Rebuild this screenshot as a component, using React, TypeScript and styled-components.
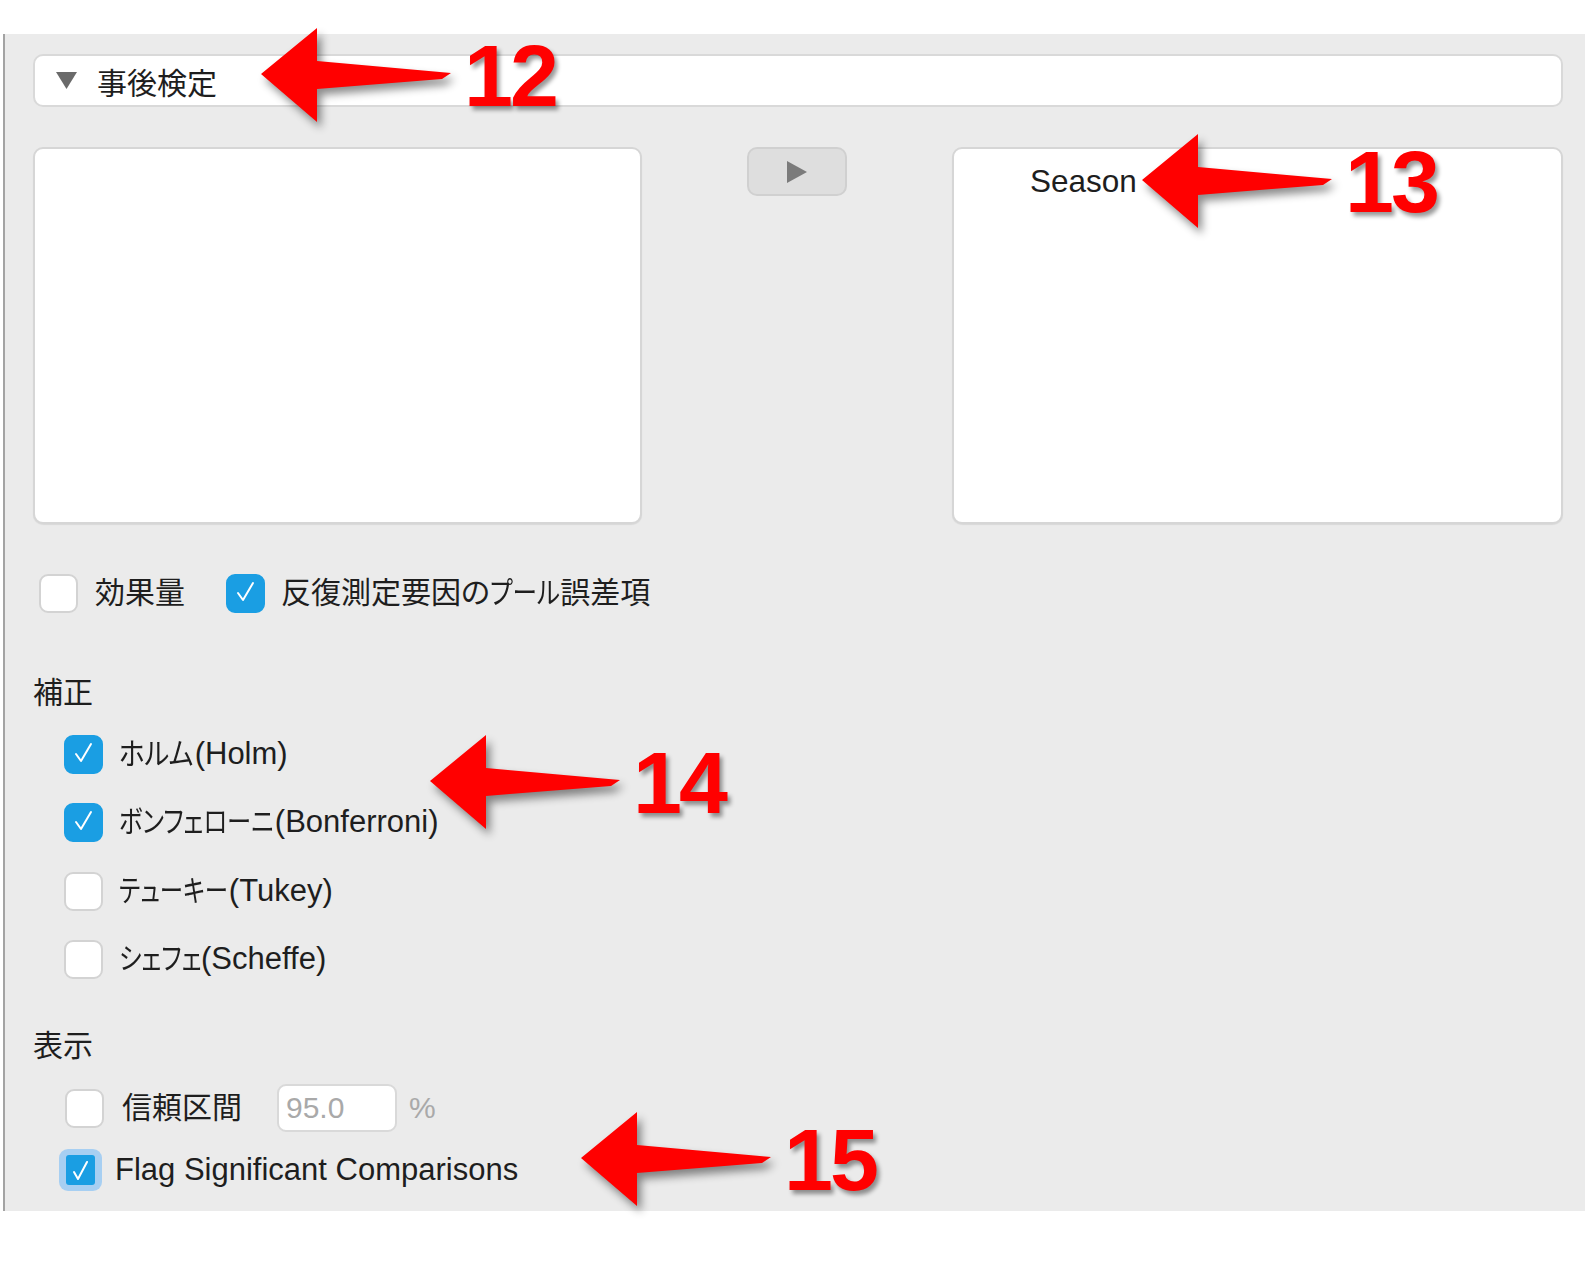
import React from "react";
import styled, { createGlobalStyle } from "styled-components";

const GlobalStyle = createGlobalStyle`
  html, body {
    margin: 0;
    padding: 0;
    background: #ffffff;
  }
  body {
    font-family: "Liberation Sans", "Noto Sans CJK JP", sans-serif;
    color: #1e1e1e;
    font-feature-settings: "palt";
  }
`;

const Page = styled.div`
  position: relative;
  width: 1585px;
  height: 1272px;
  padding-top: 34px;
  box-sizing: border-box;
  overflow: hidden;
`;

const Panel = styled.div`
  margin-left: 3px;
  height: 1177px;
  box-sizing: border-box;
  border-left: 2px solid #a3a3a3;
  background: #ebebeb;
  padding: 20px 22px 0 28px;
  display: flex;
  flex-direction: column;
`;

const SectionHeader = styled.div`
  height: 53px;
  box-sizing: border-box;
  background: #ffffff;
  border: 2px solid #d9d9d9;
  border-radius: 10px;
  display: flex;
  align-items: center;
  padding-left: 21px;
  gap: 20px;
  font-size: 30px;
`;

const ListsRow = styled.div`
  margin-top: 40px;
  height: 377px;
  display: grid;
  grid-template-columns: 609px 1fr 611px;
`;

const ListBox = styled.div`
  background: #ffffff;
  border: 2px solid #d6d6d6;
  border-radius: 10px;
  box-shadow: 0 1px 1px rgba(0, 0, 0, 0.08);
  padding: 14px 0 0 76px;
  font-size: 31.5px;
  line-height: 36px;
`;

const Middle = styled.div`
  display: flex;
  justify-content: center;
  align-items: flex-start;
`;

const MoveButton = styled.div`
  width: 100px;
  height: 49px;
  box-sizing: border-box;
  background: #dedede;
  border: 2px solid #d0d0d0;
  border-radius: 10px;
  display: flex;
  align-items: center;
  justify-content: center;
`;

const Row = styled.div<{ $indent?: number; $top: number; $h?: number }>`
  display: flex;
  align-items: center;
  height: ${(p) => p.$h ?? 40}px;
  margin-top: ${(p) => p.$top}px;
  padding-left: ${(p) => p.$indent ?? 6}px;
  font-size: 30px;
`;

const Label = styled.span<{ $gap?: number }>`
  margin-left: ${(p) => p.$gap ?? 17}px;
  white-space: nowrap;
  line-height: 36px;
`;

const Latin = styled.span`
  font-size: 31px;
`;

/* narrow (condensed) katakana as rendered in the original UI */
const Kana = styled.span<{ $scale: number; $cut: number }>`
  display: inline-block;
  transform: scaleX(${(p) => p.$scale});
  transform-origin: left center;
  margin-right: ${(p) => -p.$cut}px;
`;

const GroupTitle = styled.div<{ $top: number }>`
  margin-top: ${(p) => p.$top}px;
  height: 36px;
  line-height: 36px;
  font-size: 30px;
`;

const Box = styled.div<{ $checked?: boolean; $spaced?: number }>`
  width: 39px;
  height: 39px;
  box-sizing: border-box;
  flex: none;
  border-radius: 9px;
  margin-left: ${(p) => p.$spaced ?? 0}px;
  background: ${(p) => (p.$checked ? "#1a9ee3" : "#ffffff")};
  border: 2px solid ${(p) => (p.$checked ? "#1a9ee3" : "#d3d3d3")};
  display: flex;
  align-items: center;
  justify-content: center;
`;

const FocusBox = styled.div`
  width: 43px;
  height: 42px;
  box-sizing: border-box;
  flex: none;
  margin-left: -5px;
  border-radius: 9px;
  background: #a7cff2;
  display: flex;
  align-items: center;
  justify-content: center;
`;

const FocusInner = styled.div`
  width: 29px;
  height: 30px;
  border-radius: 3px;
  background: #1a9ee3;
  display: flex;
  align-items: center;
  justify-content: center;
`;

const NumberInput = styled.div`
  margin-left: 35px;
  width: 120px;
  height: 48px;
  box-sizing: border-box;
  background: #ffffff;
  border: 2px solid #d9d9d9;
  border-radius: 9px;
  color: #a9a9a9;
  font-size: 30px;
  display: flex;
  align-items: center;
  padding-left: 7px;
`;

const Unit = styled.span`
  margin-left: 12px;
  color: #a9a9a9;
  font-size: 30px;
`;

const Annotation = styled.div`
  position: absolute;
  display: flex;
  align-items: flex-start;
  pointer-events: none;
`;

const ArrowSvg = styled.svg`
  display: block;
  flex: none;
  filter: drop-shadow(4px 6px 4px rgba(0, 0, 0, 0.45));
`;

const Num = styled.div`
  margin-top: 7px;
  margin-left: 8px;
  font-family: "Liberation Sans", sans-serif;
  font-weight: 700;
  font-size: 88px;
  line-height: 90px;
  color: #ff0000;
  letter-spacing: -3px;
  text-shadow: 3px 4px 4px rgba(0, 0, 0, 0.4);
`;

const Check = ({ small }: { small?: boolean }) =>
  small ? (
    <svg width="20" height="22" viewBox="0 0 20 22">
      <polyline points="3,13 7,20 16,3" fill="none" stroke="#ffffff" strokeWidth="2" strokeLinecap="round" strokeLinejoin="round" />
    </svg>
  ) : (
    <svg width="22" height="24" viewBox="0 0 22 24">
      <polyline points="3,12 8,19 18,2" fill="none" stroke="#ffffff" strokeWidth="2" strokeLinecap="round" strokeLinejoin="round" />
    </svg>
  );

const CheckBox = ({ checked, spaced }: { checked?: boolean; spaced?: number }) => (
  <Box $checked={checked} $spaced={spaced}>
    {checked && <Check />}
  </Box>
);

const Callout = ({ x, y, n }: { x: number; y: number; n: string }) => (
  <Annotation style={{ left: x - 5, top: y - 50 }}>
    <ArrowSvg width="200" height="110" viewBox="0 0 200 110">
      <polygon points="5,50 61,4 61,37 195,49 186,55 61,65 61,98" fill="#ff0000" />
    </ArrowSvg>
    <Num>{n}</Num>
  </Annotation>
);

export default function App() {
  return (
    <Page>
      <GlobalStyle />
      <Panel>
        <SectionHeader>
          <svg width="21" height="17" viewBox="0 0 21 17">
            <polygon points="0,0 21,0 10.5,17" fill="#6a6a6a" />
          </svg>
          <span>事後検定</span>
        </SectionHeader>

        <ListsRow>
          <ListBox />
          <Middle>
            <MoveButton>
              <svg width="20" height="22" viewBox="0 0 20 22">
                <polygon points="0,0 20,11 0,22" fill="#7b7b7b" />
              </svg>
            </MoveButton>
          </Middle>
          <ListBox>Season</ListBox>
        </ListsRow>

        <Row $top={49}>
          <CheckBox />
          <Label>効果量</Label>
          <CheckBox checked spaced={41} />
          <Label $gap={16}>
            反復測定要因の<Kana $scale={0.82} $cut={15}>プール</Kana>誤差項
          </Label>
        </Row>

        <GroupTitle $top={62}>補正</GroupTitle>
        <Row $top={23} $indent={31}>
          <CheckBox checked />
          <Label $gap={16}>
            <Kana $scale={0.88} $cut={9}>ホルム</Kana>
            <Latin>(Holm)</Latin>
          </Label>
        </Row>
        <Row $top={28} $indent={31}>
          <CheckBox checked />
          <Label $gap={16}>
            <Kana $scale={0.81} $cut={35}>ボンフェローニ</Kana>
            <Latin>(Bonferroni)</Latin>
          </Label>
        </Row>
        <Row $top={29} $indent={31}>
          <CheckBox />
          <Label $gap={16}>
            <Kana $scale={0.78} $cut={30}>テューキー</Kana>
            <Latin>(Tukey)</Latin>
          </Label>
        </Row>
        <Row $top={28} $indent={31}>
          <CheckBox />
          <Label $gap={16}>
            <Kana $scale={0.81} $cut={20}>シェフェ</Kana>
            <Latin>(Scheffe)</Latin>
          </Label>
        </Row>

        <GroupTitle $top={49}>表示</GroupTitle>
        <Row $top={20} $indent={32} $h={48}>
          <CheckBox />
          <Label $gap={18}>信頼区間</Label>
          <NumberInput>95.0</NumberInput>
          <Unit>%</Unit>
        </Row>
        <Row $top={17} $indent={31} $h={42}>
          <FocusBox>
            <FocusInner>
              <Check small />
            </FocusInner>
          </FocusBox>
          <Label $gap={13}>
            <Latin>Flag Significant Comparisons</Latin>
          </Label>
        </Row>
      </Panel>

      <Callout x={261} y={74} n="12" />
      <Callout x={1142} y={180} n="13" />
      <Callout x={430} y={781} n="14" />
      <Callout x={581} y={1158} n="15" />
    </Page>
  );
}
